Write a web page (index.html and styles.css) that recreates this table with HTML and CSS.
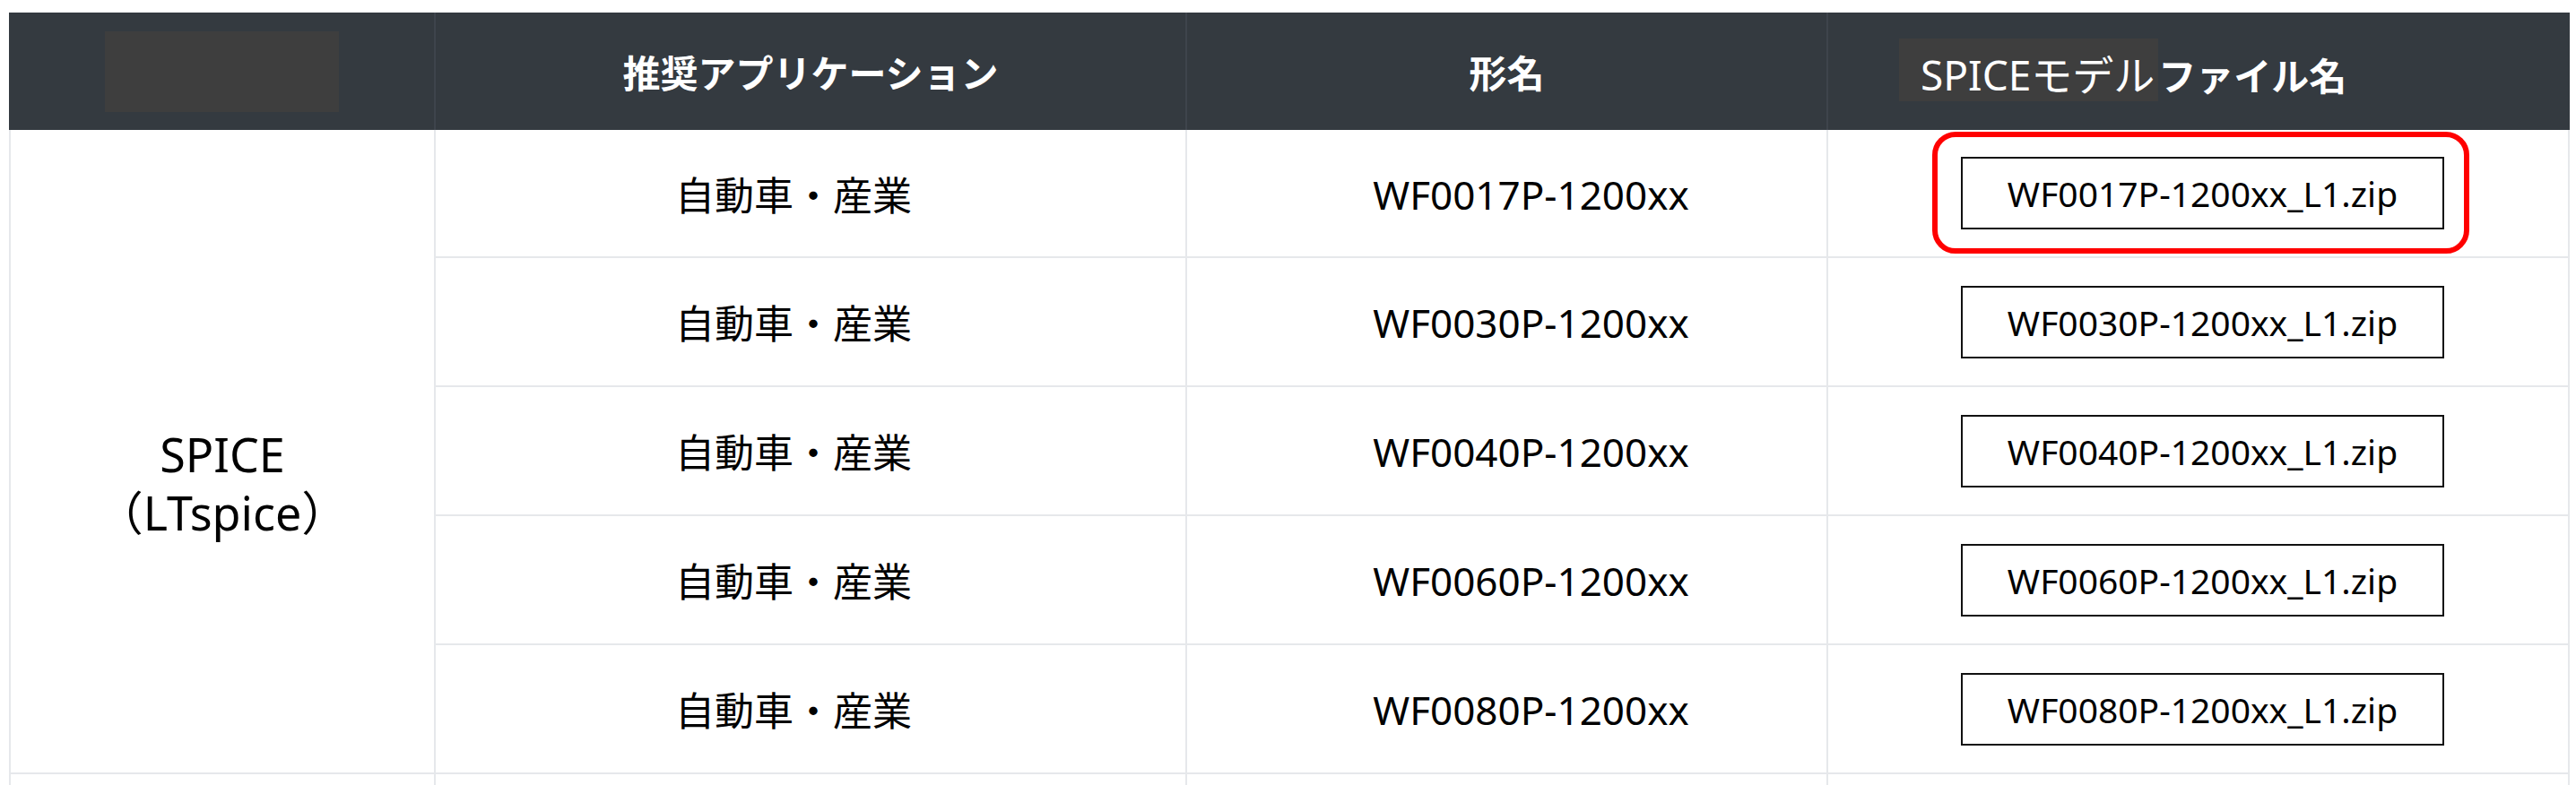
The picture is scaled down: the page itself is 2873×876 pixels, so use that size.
FILE: index.html
```html
<!DOCTYPE html>
<html lang="ja">
<head>
<meta charset="utf-8">
<title>SPICEモデル</title>
<link rel="stylesheet" href="styles.css">
</head>
<body>
<div class="model-table">
  <div class="head">
    <div class="hcell hcell-first"><span class="redacted"></span></div>
    <div class="hcell">推奨アプリケーション</div>
    <div class="hcell">形名</div>
    <div class="hcell hcell-file"><div class="title-wrap"><span class="overlay">SPICEモデル</span>ファイル名</div></div>
  </div>
  <div class="body">
    <div class="cell series">SPICE<br>（LTspice）</div>

    <div class="cell app">自動車・産業</div>
    <div class="cell part">WF0017P-1200xx</div>
    <div class="cell file"><span class="file-box hl">WF0017P-1200xx_L1.zip</span></div>

    <div class="cell app">自動車・産業</div>
    <div class="cell part">WF0030P-1200xx</div>
    <div class="cell file"><span class="file-box">WF0030P-1200xx_L1.zip</span></div>

    <div class="cell app">自動車・産業</div>
    <div class="cell part">WF0040P-1200xx</div>
    <div class="cell file"><span class="file-box">WF0040P-1200xx_L1.zip</span></div>

    <div class="cell app">自動車・産業</div>
    <div class="cell part">WF0060P-1200xx</div>
    <div class="cell file"><span class="file-box">WF0060P-1200xx_L1.zip</span></div>

    <div class="cell app">自動車・産業</div>
    <div class="cell part">WF0080P-1200xx</div>
    <div class="cell file"><span class="file-box">WF0080P-1200xx_L1.zip</span></div>

    <div class="cell"></div>
    <div class="cell"></div>
    <div class="cell"></div>
    <div class="cell"></div>
  </div>
</div>
</body>
</html>
```

FILE: styles.css
```css
html, body {
  margin: 0;
  padding: 0;
  background: #ffffff;
  overflow: hidden;
}

body {
  padding: 14px 0 0 10px;
  font-family: "Noto Sans", "Noto Sans CJK JP", sans-serif;
  color: #000000;
}

.model-table {
  width: 2856px;
}

.head {
  display: grid;
  grid-template-columns: 474px 838px 715px 829px;
  height: 131px;
  background: #343a40;
}

.hcell {
  display: flex;
  align-items: center;
  justify-content: center;
  color: #ffffff;
  font-size: 42px;
  font-weight: 700;
  border-left: 2px solid #3e444c;
  white-space: nowrap;
}

.hcell-first {
  border-left: none;
}

.redacted {
  display: block;
  width: 261px;
  height: 90px;
  margin-top: 1px;
  background: #3e3e3e;
}

.hcell-file {
  justify-content: flex-start;
  padding-left: 79px;
}

.title-wrap {
  margin-top: -3px;
}

.overlay {
  display: inline-block;
  padding: 10px 4px 0 24px;
  line-height: 60px;
  font-size: 46px;
  font-weight: 400;
  background: #3e3e3e;
}

.body {
  display: grid;
  grid-template-columns: 472px 836px 713px 825px;
  grid-template-rows: 141px 142px 142px 142px 142px 20px;
  gap: 2px;
  padding: 0 2px;
  background: #e6e8eb;
}

.cell {
  display: flex;
  align-items: center;
  justify-content: center;
  background: #ffffff;
  white-space: nowrap;
}

.series {
  grid-row: 1 / span 5;
  flex-direction: column;
  font-size: 52px;
  line-height: 65px;
  text-align: center;
  padding-top: 71px;
  box-sizing: border-box;
}

.app {
  font-size: 44px;
  padding-right: 38px;
}

.part {
  font-size: 44px;
  padding-left: 54px;
  padding-top: 2px;
}

.file {
  padding-left: 10px;
}

.file-box {
  position: relative;
  display: flex;
  align-items: center;
  justify-content: center;
  box-sizing: border-box;
  width: 539px;
  height: 81px;
  border: 2px solid #111111;
  font-size: 39px;
}

.file-box.hl::after {
  content: "";
  position: absolute;
  top: -30px;
  left: -34px;
  right: -30px;
  bottom: -29px;
  border: 6px solid #ff0000;
  border-radius: 26px;
}
```
